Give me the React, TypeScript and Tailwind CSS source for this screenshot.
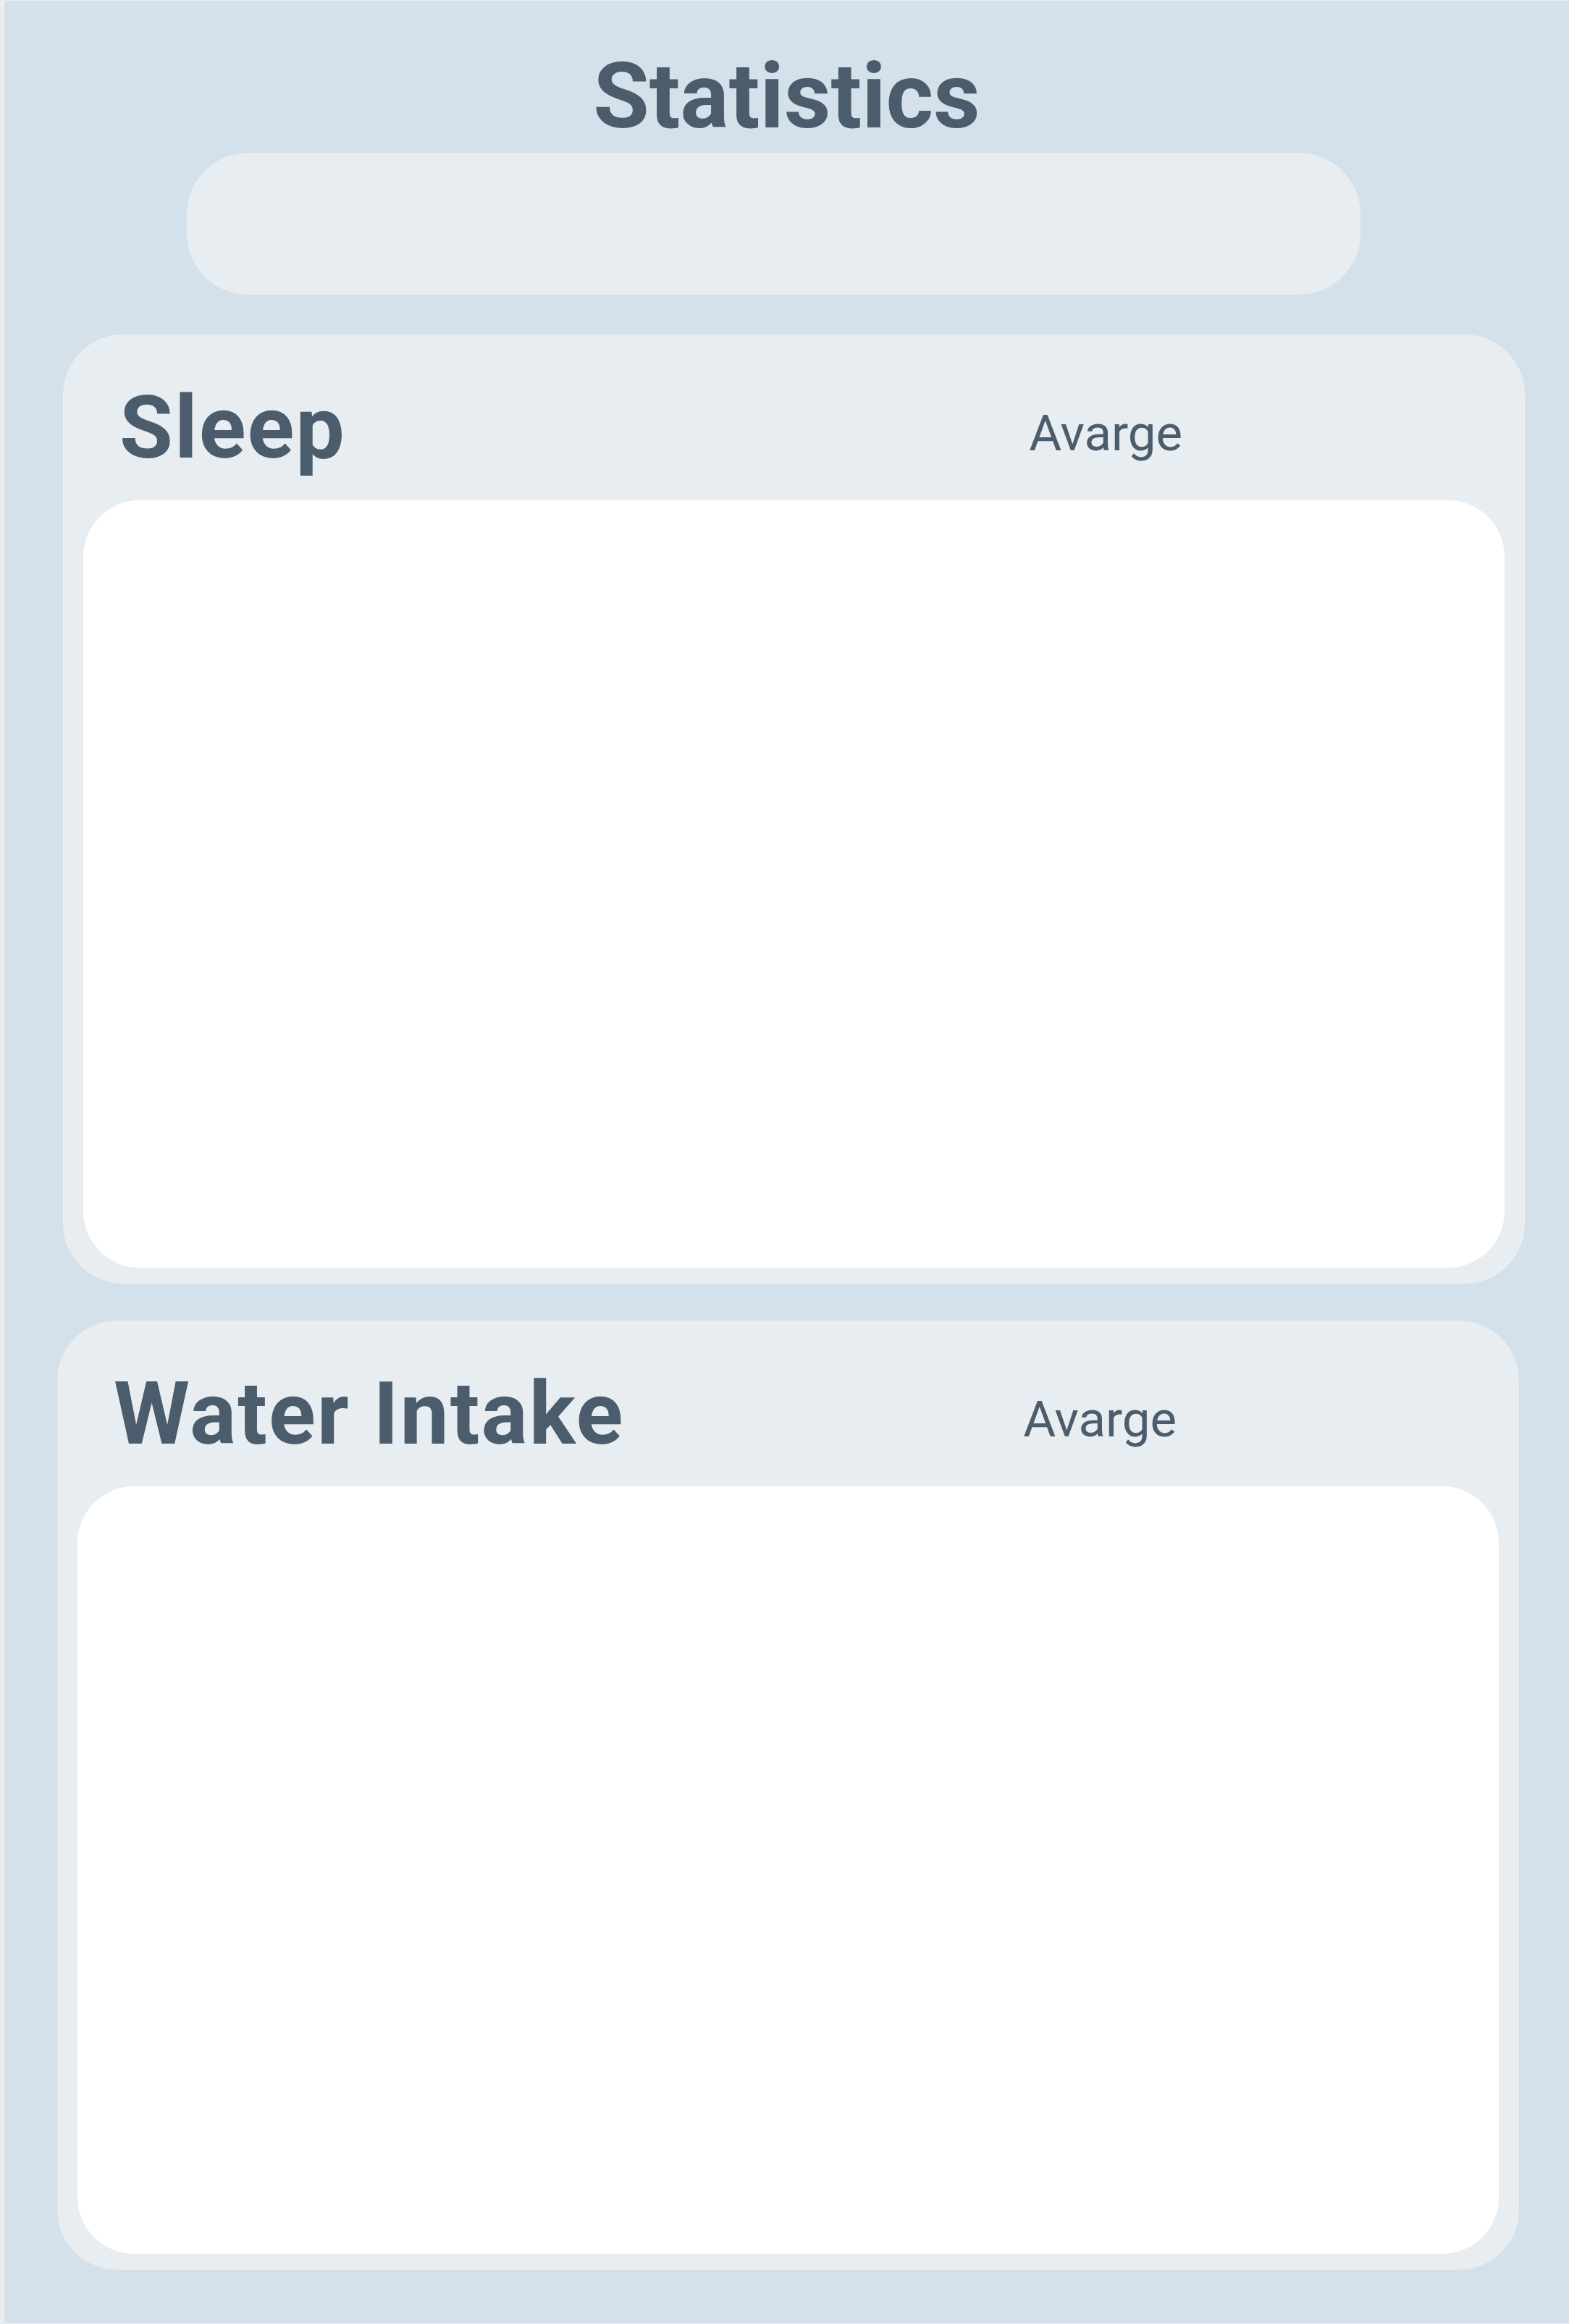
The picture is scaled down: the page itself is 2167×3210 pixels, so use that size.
import React from 'react';

interface StatCardProps {
  title: string;
  offsetLeft: string;
}

function StatCard({ title, offsetLeft }: StatCardProps) {
  return (
    <section
      className={`${offsetLeft} w-[2019px] rounded-[83px] bg-[#e8edf2] px-[28px] pb-[22px]`}
    >
      {/* Header: title + average label */}
      <div className="flex h-[229px] items-start pl-[50px]">
        <h2 className="pt-[69px] text-[120px] font-bold leading-none tracking-[2px] text-[#4b5d6c]">
          {title}
        </h2>
        <span className="ml-auto mr-[445px] pt-[102px] text-[69px] font-normal leading-none text-[#4b5d6c]">
          Avarge
        </span>
      </div>

      {/* Chart area (empty) */}
      <div className="h-[1060px] rounded-[78px] bg-white" />
    </section>
  );
}

export default function App() {
  return (
    <div
      className="h-[3210px] w-full bg-[#e9eef2] py-[1px] pl-[6px]"
      style={{ fontFamily: 'Roboto, "Noto Sans", Arial, sans-serif' }}
    >
      <main className="flex h-full flex-col bg-[#d4e1ea]">
        <h1 className="pt-[69px] text-center text-[126px] font-bold leading-none text-[#4b5d6c]">
          Statistics
        </h1>

        {/* Search / filter pill */}
        <div className="ml-[252px] mt-[15px] h-[196px] w-[1621px] rounded-[85px] bg-[#e8edf2]" />

        <div className="mt-[55px] flex flex-col gap-[51px]">
          <StatCard title="Sleep" offsetLeft="ml-[81px]" />
          <StatCard title="Water Intake" offsetLeft="ml-[73px]" />
        </div>
      </main>
    </div>
  );
}
